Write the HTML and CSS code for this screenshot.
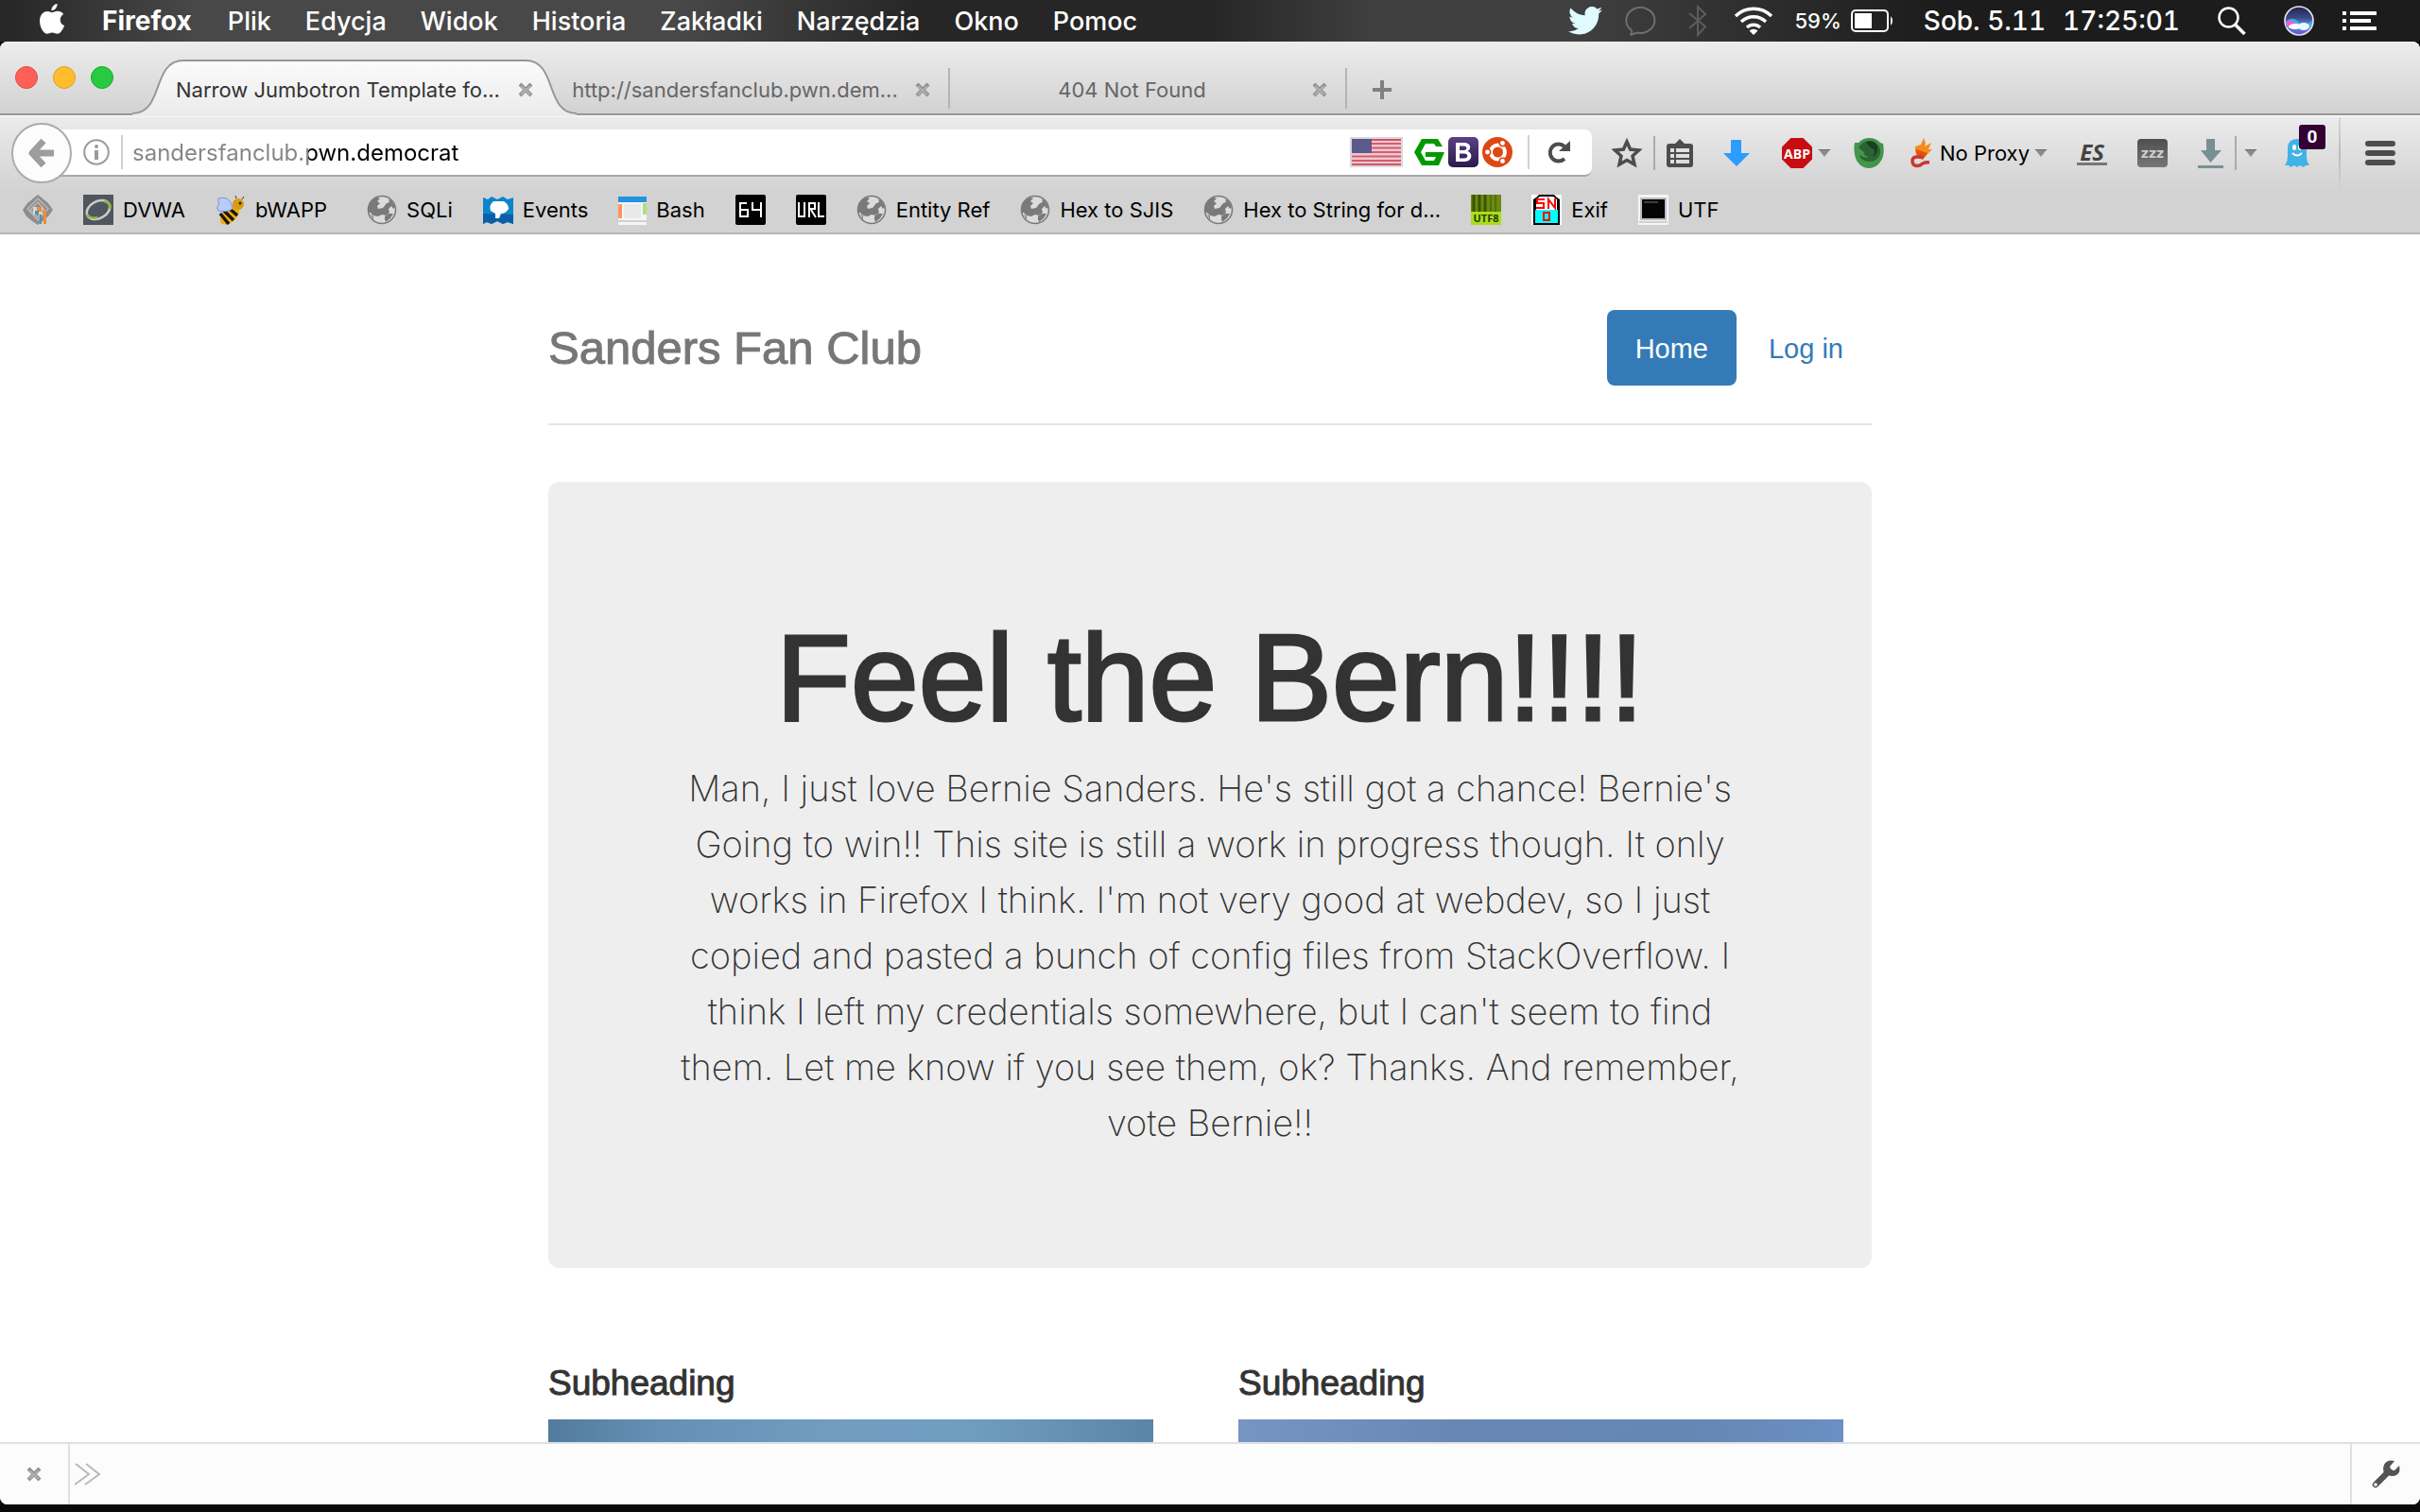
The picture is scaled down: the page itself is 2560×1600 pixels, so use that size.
FILE: index.html
```html
<!DOCTYPE html>
<html lang="pl">
<head>
<meta charset="utf-8">
<title>Narrow Jumbotron Template for Bootstrap</title>
<meta name="viewport" content="width=device-width, initial-scale=1">
<link rel="stylesheet" href="styles.css">
</head>
<body>
<svg class="defs" aria-hidden="true">
  <symbol id="globe" viewBox="0 0 32 32">
    <circle cx="16" cy="16" r="14.5" fill="#dcdcdc" stroke="#7a7a7a" stroke-width="1.6"/>
    <path fill="#7a7a7a" d="M2 14c0-6 4-10 9-11l3 1-3 3 3 2-3 3 1 3 5-1 4-5 3-1-1-3 3 1 4 7-2 2-2-3-3 3 1 4-4 3-4-1-4 2-5-1-3-3-2 0z"/>
    <path fill="#7a7a7a" d="M4 20l3 3 0 4zM19 23l4-3 5 0-3 5-5 4-1-3z"/>
  </symbol>
  <symbol id="close" viewBox="0 0 16 16">
    <path d="M2 2l12 12M14 2L2 14" stroke="#8f8f8f" stroke-width="4" fill="none"/>
    <path d="M3 4l10 9M13 4l-10 9" stroke="#b0b0b0" stroke-width="2" fill="none"/>
  </symbol>
  <symbol id="caret" viewBox="0 0 14 9">
    <path d="M0 0h14L7 9z" fill="#8b8b8b"/><path d="M0 0h14v1H0z" fill="#6c6c6c"/>
  </symbol>
</svg>

<header class="menubar">
  <nav class="menus" aria-label="Menu">
    <button class="apple" aria-label="Apple"><svg width="28" height="32" viewBox="0 0 28 32"><path fill="#fff" d="M19.500 0c.4 3.600-2.600 7.200-6 7.300-.4-3.500 2.800-6.900 6-7.300zM14 9.200c1.300 0 3-1.500 6-1.500 2.500 0 4.800 1.200 6.200 3.200-5.200 3.200-4.300 10.200.9 12.200-1.400 4-4.200 8.700-7.300 8.700-2 0-3-1.300-5.500-1.300s-3.600 1.300-5.400 1.300C5 31.800 1 24.800 1 18.300c0-6.300 3.800-10.200 8-10.200 2.300 0 4 1.100 5 1.100z"/></svg></button>
    <button class="app-name">Firefox</button>
    <button>Plik</button>
    <button>Edycja</button>
    <button>Widok</button>
    <button>Historia</button>
    <button>Zakładki</button>
    <button>Narzędzia</button>
    <button>Okno</button>
    <button>Pomoc</button>
  </nav>
  <div class="status">
    <svg width="36" height="30" viewBox="0 0 24 20"><path fill="#dffbff" d="M24 2.400c-.9.400-1.800.7-2.800.8 1-.6 1.800-1.600 2.200-2.700-1 .6-2 1-3.100 1.200a4.900 4.900 0 0 0-8.400 4.500C7.700 6 4.100 4 1.700 1a4.900 4.900 0 0 0 1.500 6.600c-.8 0-1.600-.2-2.200-.6v.1c0 2.400 1.700 4.400 3.900 4.800-.7.200-1.500.2-2.200.1.600 2 2.400 3.400 4.600 3.400A9.900 9.900 0 0 1 0 17.400 14 14 0 0 0 7.500 19.600c9.100 0 14-7.500 14-14v-.6c1-.7 1.800-1.600 2.500-2.600z"/></svg>
    <svg class="bubble" width="34" height="34" viewBox="0 0 34 34"><path d="M8 27a15 13.500 0 1 1 6 2.600L6.500 32c2-1.500 2-3 1.500-5z" fill="none" stroke="#6e6e6e" stroke-width="2"/></svg>
    <svg class="bluetooth" width="20" height="34" viewBox="0 0 20 34"><path d="M1 9l17 14-8 9V2l8 8L1 25" fill="none" stroke="#5d5d5d" stroke-width="2"/></svg>
    <svg class="wifi" width="42" height="32" viewBox="0 0 42 32"><g fill="none" stroke="#fff" stroke-width="3.500"><path d="M2 11a27 27 0 0 1 38 0"/><path d="M8 17a18.500 18.500 0 0 1 26 0"/><path d="M14 23a10 10 0 0 1 14 0"/></g><path fill="#fff" d="M16.500 26.500a6.500 6.500 0 0 1 9 0L21 31z"/></svg>
    <span class="battery-text">59%</span>
    <svg class="battery" width="46" height="24" viewBox="0 0 46 24"><rect x="1" y="1" width="38" height="22" rx="4" fill="none" stroke="#fff" stroke-width="2"/><rect x="4" y="4" width="18" height="16" fill="#fff"/><path fill="#fff" d="M42 7q4 5 0 10z"/></svg>
    <time class="date">Sob. 5.11</time>
    <time class="clock">17:25:01</time>
    <svg class="search" width="30" height="30" viewBox="0 0 30 30"><circle cx="11.500" cy="11.500" r="10" fill="none" stroke="#fff" stroke-width="2.500"/><path d="M18.500 19l10 10" stroke="#fff" stroke-width="3.500"/></svg>
    <svg class="siri" width="32" height="32" viewBox="0 0 32 32"><defs><linearGradient id="siri-bg" x1="0" y1="0" x2="0" y2="1"><stop offset="0" stop-color="#26224a"/><stop offset=".4" stop-color="#3a4a86"/><stop offset=".65" stop-color="#6c8cf0"/><stop offset="1" stop-color="#5a56c8"/></linearGradient></defs><circle cx="16" cy="16" r="15" fill="url(#siri-bg)" stroke="#e9e4f4" stroke-width="1.600"/><path d="M2 17q8-7 14 1t14-3q0 6-5 8-9-5-23 0z" fill="#28c9e8" opacity=".8"/><path d="M2 18q6-5 11 1l-6 5q-5-2-5-6z" fill="#f25ad0"/><ellipse cx="12" cy="22" rx="7" ry="3" fill="#fff"/><ellipse cx="21" cy="22" rx="6" ry="4" fill="#e8fbff"/></svg>
    <svg class="list" width="36" height="20" viewBox="0 0 36 20"><path fill="#fff" d="M0 0h4v4H0zM8 0h28v4H8zM0 8h4v4H0zM8 8h22v4H8zM0 16h4v4H0zM8 16h28v4H8z"/></svg>
  </div>
</header>

<div class="window">
  <div class="tabstrip">
    <div class="lights">
      <button class="light red" aria-label="Zamknij"></button>
      <button class="light yellow" aria-label="Minimalizuj"></button>
      <button class="light green" aria-label="Powiększ"></button>
    </div>
    <div class="tab active">
      <svg class="tab-shape" viewBox="0 0 470 60" preserveAspectRatio="none" aria-hidden="true">
        <defs><linearGradient id="tab-fill" x1="0" y1="0" x2="0" y2="1"><stop offset="0" stop-color="#fbfbfb"/><stop offset="1" stop-color="#ebebeb"/></linearGradient></defs>
        <path fill="url(#tab-fill)" d="M0 60V57C34 57 20 1 54 1H416C450 1 436 57 470 57V60z"/>
        <path fill="none" stroke="#969696" stroke-width="2" d="M0 57C34 57 20 1 54 1H416C450 1 436 57 470 57"/>
      </svg>
      <span class="tab-title">Narrow Jumbotron Template fo...</span>
      <button class="tab-close" aria-label="Zamknij kartę"><svg width="16" height="16"><use href="#close"/></svg></button>
    </div>
    <div class="tab">
      <span class="tab-title">http://sandersfanclub.pwn.dem...</span>
      <button class="tab-close" aria-label="Zamknij kartę"><svg width="16" height="16"><use href="#close"/></svg></button>
    </div>
    <div class="tab">
      <span class="tab-title">404 Not Found</span>
      <button class="tab-close" aria-label="Zamknij kartę"><svg width="16" height="16"><use href="#close"/></svg></button>
    </div>
    <button class="new-tab" aria-label="Nowa karta"><svg width="20" height="20" viewBox="0 0 20 20"><path fill="#808080" d="M8 0h4v8h8v4h-8v8H8v-8H0V8h8z"/></svg></button>
  </div>

  <div class="chrome">
    <div class="navbar">
      <button class="back" aria-label="Wstecz"><svg width="28" height="32" viewBox="0 0 28 32"><path d="M16 3L4 16l12 13M5 16h22" fill="none" stroke="#9d9d9d" stroke-width="7" stroke-linejoin="round"/></svg></button>
      <div class="urlbar">
        <svg width="28" height="28" viewBox="0 0 28 28"><circle cx="14" cy="14" r="12.800" fill="none" stroke="#9a9a9a" stroke-width="2"/><circle cx="14" cy="8" r="2" fill="#9a9a9a"/><path fill="#9a9a9a" d="M12 12h4v10h-4z"/></svg>
        <span class="url-rule"></span>
        <input class="url" type="text" aria-label="Adres" value="sandersfanclub.pwn.democrat">
        <svg class="flag" width="56" height="32" viewBox="0 0 56 32"><rect width="56" height="32" fill="#d9d9d9"/><rect x="2" y="2" width="52" height="28" fill="#f2c6ce"/><path stroke="#c4304c" stroke-width="1.600" d="M2 3h52M2 29h52"/><path stroke="#cf5f73" stroke-width="2" d="M2 7h52M2 11.500h52M2 16h52M2 20.500h52M2 25h52"/><rect x="2" y="2" width="21" height="15" fill="#5a5a8c"/></svg>
        <svg class="addon" width="32" height="32" viewBox="0 0 32 32"><path fill="#009900" d="M8 2h17l5 8h-7l-2-3H12l-5 9 5 9h9l2-4H12v-5h20l-6 14H8L0 16z"/></svg>
        <svg class="addon" width="32" height="32" viewBox="0 0 32 32"><defs><linearGradient id="boot" x1="0" y1="0" x2="0" y2="1"><stop offset="0" stop-color="#5b4183"/><stop offset="1" stop-color="#2a1a4c"/></linearGradient></defs><rect width="32" height="32" rx="5" fill="url(#boot)"/><path fill="#fff" fill-rule="evenodd" d="M8 6h9c7 0 8 7 3.500 9 6 2 5 11-3 11H8zM12 9.500v4.500h4.500c4 0 4-4.500 0-4.500zM12 17.500v5h5c4.500 0 4.500-5 0-5z"/></svg>
        <svg class="addon" width="32" height="32" viewBox="0 0 32 32"><circle cx="16" cy="16" r="16" fill="#dd4814"/><circle cx="16.500" cy="16" r="7.500" fill="none" stroke="#fff" stroke-width="4"/><g fill="#fff" stroke="#dd4814" stroke-width="1.500"><circle cx="5.500" cy="16" r="3.200"/><circle cx="21.500" cy="6.500" r="3.200"/><circle cx="21.500" cy="25.500" r="3.200"/></g></svg>
        <span class="url-rule reload-rule"></span>
        <button class="reload" aria-label="Odśwież"><svg width="24" height="24" viewBox="0 0 24 24"><path d="M17 19a9 9 0 1 1 0-13" fill="none" stroke="#4d4d4d" stroke-width="4"/><path fill="#4d4d4d" d="M23 0v11H11z"/></svg></button>
      </div>
      <div class="tools">
        <button class="star" aria-label="Zakładka"><svg width="32" height="32" viewBox="0 0 32 32"><path d="M16 4l3.600 8 9 1-6.600 6 2 9-8-4.500L8 28l2-9-6.600-6 9-1z" fill="none" stroke="#4d4d4d" stroke-width="3.500"/></svg></button>
        <span class="tool-rule"></span>
        <button class="clip" aria-label="Lista"><svg width="28" height="31" viewBox="0 0 28 31"><path fill="#4d4d4d" fill-rule="evenodd" d="M3 5h6l5-5 5 5h6q3 0 3 3v19q0 3-3 3H3q-3 0-3-3V8q0-3 3-3zM4 10h4v4H4zM10 10h14v4H10zM4 16h4v4H4zM10 16h14v4H10zM4 22h4v4H4zM10 22h14v4H10z"/></svg></button>
        <button class="blue-arrow" aria-label="Pobierz"><svg width="28" height="28" viewBox="0 0 28 28"><path fill="#2e9bff" d="M8 1q0-1 1-1h9q1 0 1 1v13h9L14 28 0 14h8z"/></svg></button>
        <button class="abp" aria-label="Adblock Plus"><svg width="32" height="32" viewBox="0 0 32 32"><path fill="#c70d12" d="M9.500 0h13L32 9.500v13L22.500 32h-13L0 22.500v-13z"/><text x="16" y="22" text-anchor="middle" class="abp-text">ABP</text></svg></button>
        <button class="menu-caret" aria-label="Opcje"><svg width="14" height="8"><use href="#caret"/></svg></button>
        <button class="shield" aria-label="Ochrona"><svg width="32" height="32" viewBox="0 0 32 32"><path fill="#43954a" d="M1 5l4 0Q10 0 16 0q8 0 12 5l3 1q2 12-2 18-5 8-13 8T3 24Q-1 15 1 5z"/><path fill="#2b6334" d="M5 10q6-9 15-7 9 4 8 13-2 9-12 9-9-1-10-7 6 4 10 2-6-1-5-5-3-2-6-5z"/><path fill="#17401f" d="M13 4q9-2 12 5 1 8-5 11 4-6 0-9-4-1-7-7z"/></svg></button>
        <button class="proxy"><svg width="24" height="32" viewBox="0 0 24 32"><path fill="#f58b1e" d="M5 9l6-2 3-7 2 6-1 3 7-4-3 7 4 0-5 5-3 4-7-1-3-5z"/><path fill="#e2500f" d="M6 12l12 4-4 5-7-1z"/><path d="M14 21q-12-3-12 3 0 7 8 5 4-4 10-3" fill="none" stroke="#c8392f" stroke-width="3.500"/></svg><span>No Proxy</span><svg class="proxy-caret" width="14" height="8"><use href="#caret"/></svg></button>
        <button class="es">ES</button>
        <button class="zzz">zzz</button>
        <button class="download" aria-label="Pobrane"><svg width="27" height="31" viewBox="0 0 27 31"><path fill="#789093" d="M9 0h9v12h7L13.500 25 3 12h6zM0 28h27v3H0z"/></svg></button>
        <span class="tool-rule"></span>
        <button class="download-caret" aria-label="Opcje pobierania"><svg width="14" height="8"><use href="#caret"/></svg></button>
        <button class="ghost" aria-label="Ghostery"><svg width="26" height="30" viewBox="0 0 26 30"><path fill="#41b3e6" d="M3 10Q3 0 13 0t10 10v9q0 5 3 9l-4 0-2 2-4-2-3 2-3-2-4 2-2-2-4 0q3-4 3-9z"/><ellipse cx="10" cy="9" rx="2" ry="3" fill="#fff"/><ellipse cx="16" cy="9" rx="2" ry="3" fill="#fff"/><path d="M8 15q5 5 10 0" fill="none" stroke="#fff" stroke-width="1.800"/></svg><span class="badge">0</span></button>
        <span class="menu-rule"></span>
        <button class="hamburger" aria-label="Menu"><svg width="32" height="26" viewBox="0 0 32 26"><path stroke="#4d4d4d" stroke-width="6" stroke-linecap="round" d="M3 3h26M3 13h26M3 23h26"/></svg></button>
      </div>
    </div>

    <nav class="bookmarks" aria-label="Zakładki">
      <a href="#" aria-label="Strona"><svg width="32" height="32" viewBox="0 0 32 32"><path fill="#8f8d8a" d="M16 0l5 4 6 5 5 7-5 7-6 5-5 4-6-4-6-5-4-7 5-7 6-5z"/><g fill="none" stroke="#bab8b5" stroke-width="1.500"><path d="M16 4l11 11-11 12L5 15z"/><path d="M16 8l7 8-7 8-8-8z"/></g><path fill="#d6d6d6" d="M11 13h10v8H11z"/><path fill="#f08b3c" d="M15 13h5v4h5v14h-3V18h-7z"/><path fill="#4b93b5" d="M13 17h4v4h-4zM18 21h2v10h-2z"/></svg></a>
      <a href="#"><svg width="32" height="32" viewBox="0 0 32 32"><rect width="32" height="32" fill="#50565d"/><ellipse cx="16" cy="16" rx="13" ry="9" transform="rotate(-28 16 16)" fill="none" stroke="#c9cdc6" stroke-width="2.500"/><path d="M4 21q4 5 11 3M22 7q8 1 6 8" fill="none" stroke="#8db543" stroke-width="2.500"/></svg>DVWA</a>
      <a href="#" class="spaced"><svg width="32" height="32" viewBox="0 0 32 32"><ellipse cx="15" cy="22" rx="12" ry="7" transform="rotate(-42 15 22)" fill="#efae0b"/><path d="M5 20l9 11M9 17l10 10M14 14l9 8" stroke="#1c1607" stroke-width="3.500"/><circle cx="24" cy="10" r="6" fill="#d99a0d"/><circle cx="26" cy="9" r="1.500" fill="#222"/><path d="M22 4l-1-3M28 5l2-3" stroke="#333"/><path fill="#b5cdfb" stroke="#7f93c4" d="M3 4q10-3 14 6l1 5q-6 4-15 2-3-4 1-7-2-3-1-6z"/></svg>bWAPP</a>
      <a href="#"><svg width="32" height="32"><use href="#globe"/></svg>SQLi</a>
      <a href="#"><svg width="32" height="32" viewBox="0 0 32 32"><path fill="#0b86c9" d="M0 3l5 2 4-3 6 3 6-3 5 3 6-2v28l-6-2-5 2-6-3-6 3-5-2-4 2z"/><path fill="#0a5fa8" d="M0 20l32 1v10l-6-2-5 2-6-3-6 3-5-2-4 2z"/><path fill="#fff" d="M11 7h11q5 3 5 8-3 5-8 5l-2 5h-4l0-5-5-3q-2-6 3-10z"/></svg>Events</a>
      <a href="#"><svg width="30" height="32" viewBox="0 0 30 32"><path fill="#f6f6f6" d="M0 2h30v30H0z"/><path fill="#2393df" d="M0 2h30v6H0z"/><path fill="#ff9661" d="M0 10h4v15H0z"/><path fill="#b4dd7f" d="M26 9h4v12h-4z"/><path fill="#e9e9ea" d="M6 10h18v15H6z"/><path fill="#cfcfcf" d="M0 27h30v2H0z"/></svg>Bash</a>
      <a href="#" aria-label="64"><svg width="32" height="32" viewBox="0 0 32 32"><rect width="32" height="32" rx="2"/><path d="M12 9H5v14h8v-7H5M18 8v8h8M27 8v16" fill="none" stroke="#fff" stroke-width="2"/></svg></a>
      <a href="#" aria-label="URL"><svg width="32" height="32" viewBox="0 0 32 32"><rect width="32" height="32" rx="2"/><path d="M3 8v15h6V8M14 24V9h6v6h-6M16 16l5 8M24 8v15h6" fill="none" stroke="#fff" stroke-width="2"/></svg></a>
      <a href="#"><svg width="32" height="32"><use href="#globe"/></svg>Entity Ref</a>
      <a href="#"><svg width="32" height="32"><use href="#globe"/></svg>Hex to SJIS</a>
      <a href="#"><svg width="32" height="32"><use href="#globe"/></svg>Hex to String for d...</a>
      <a href="#" aria-label="UTF8"><svg class="utf-icon" width="32" height="32" viewBox="0 0 32 32"><path fill="#6b8a10" d="M0 0h32v18H0z"/><path stroke="#3d5200" stroke-width="3" d="M3 0v18M9 0v18M15 0v18"/><path stroke="#557008" stroke-width="2" d="M21 0v18M26 0v18"/><path fill="#a9dd1c" d="M0 18h32v14H0z"/><text x="16" y="29" text-anchor="middle" class="utf-text">UTF8</text></svg></a>
      <a href="#"><svg width="32" height="32" viewBox="0 0 32 32"><path fill="#fff" d="M0 0h32v32H0z"/><path fill="#000" d="M2 5l3-2 3-3h16l3 3 3 2v27H2z"/><path fill="#fff" d="M5 5l4-3h14l4 3v11H5z"/><path fill="#0ff" d="M4 16h24v14H4z"/><path d="M14 5H6v4h7v5H5M18 15V5l7 9V4M13 19h6v8h-6z" fill="none" stroke="#f00" stroke-width="2"/></svg>Exif</a>
      <a href="#"><svg width="32" height="32" viewBox="0 0 32 32"><path fill="#f5f5f8" d="M0 0h32v32H0z"/><path fill="#bcbcc2" d="M2 3h28v24H2z"/><path fill="#050505" d="M4 5h24v20H4z"/><path stroke="#777" d="M6 8h15"/><path stroke="#d0d0d0" stroke-width="2" d="M1 29h30"/></svg>UTF</a>
    </nav>
  </div>

  <main class="viewport">
    <div class="container">
      <header class="site-header">
        <h3 class="brand">Sanders Fan Club</h3>
        <nav class="pills">
          <a class="pill current" href="#">Home</a>
          <a class="pill" href="#">Log in</a>
        </nav>
      </header>
      <section class="jumbotron">
        <h1>Feel the Bern!!!!</h1>
        <p>Man, I just love Bernie Sanders. He's still got a chance! Bernie's<br>
          Going to win!! This site is still a work in progress though. It only<br>
          works in Firefox I think. I'm not very good at webdev, so I just<br>
          copied and pasted a bunch of config files from StackOverflow. I<br>
          think I left my credentials somewhere, but I can't seem to find<br>
          them. Let me know if you see them, ok? Thanks. And remember,<br>
          vote Bernie!!</p>
      </section>
      <section class="marketing">
        <article><h4>Subheading</h4><div class="photo sky"></div></article>
        <article><h4>Subheading</h4><div class="photo dusk"></div></article>
      </section>
    </div>
  </main>

  <footer class="devbar">
    <button class="dev-close" aria-label="Zamknij"><svg width="16" height="16"><use href="#close"/></svg></button>
    <label class="prompt" for="command"><svg width="28" height="24" viewBox="0 0 28 24"><path d="M1 1l14 11L0 23M12 1l14 11-15 11" fill="none" stroke="#b9b9b9" stroke-width="2"/></svg></label>
    <input id="command" type="text" aria-label="Polecenie">
    <button class="wrench" aria-label="Narzędzia"><svg width="30" height="30" viewBox="0 0 30 30"><path d="M4 26L18 12" stroke="#555452" stroke-width="6.500" stroke-linecap="round"/><path fill="#555452" d="M24 1q-8-2-11 4-3 9 4 11 8 3 12-3 1-4 0-7l-5 5q-4 0-5-4z"/><circle cx="4" cy="26" r="1.800" fill="#fff"/></svg></button>
  </footer>
</div>
</body>
</html>
```

FILE: styles.css
```css
* { box-sizing: border-box; }

html, body { height: 100%; margin: 0; }

body {
  display: flex;
  flex-direction: column;
  padding-bottom: 8px;
  overflow: hidden;
  background: #0a0a0a;
  font-family: Inter, "Open Sans", sans-serif;
  font-size: 22px;
  color: #000;
}

button {
  display: flex;
  align-items: center;
  justify-content: center;
  margin: 0;
  padding: 0;
  border: 0;
  background: none;
  color: inherit;
  font: inherit;
}

svg { display: block; flex: none; }
.defs { position: absolute; width: 0; height: 0; }

/* Menu bar */
.menubar {
  display: flex;
  flex: none;
  align-items: center;
  justify-content: space-between;
  height: 44px;
  padding: 0 46px 0 41px;
  background: linear-gradient(90deg, #262626 0, #484848 8%, #484848 28%, #262626 38%, #262626 50%, #404040 57%, #404040 65%, #1c1c1c 80%, #1c1c1c 100%);
  color: #fff;
  font-size: 27px;
  font-weight: 500;
}
.menus, .status { display: flex; align-items: center; }
.menus { gap: 36px; }
.menus .app-name { margin: 0 2px 0 3px; font-size: 28px; font-weight: 700; }
.apple { padding-bottom: 4px; }
.bubble { margin-left: 23px; }
.bluetooth { margin-left: 34px; }
.wifi { margin-left: 28px; }
.battery-text { margin-left: 22px; font-size: 22px; }
.battery { margin-left: 10px; }
.date, .clock { font-size: 28px; font-variant-numeric: tabular-nums; }
.date { margin-left: 31px; }
.clock { margin-left: 18px; }
.search { margin-left: 40px; }
.siri { margin-left: 40px; }
.list { margin-left: 30px; }

/* Browser window */
.window {
  display: flex;
  flex: 1;
  flex-direction: column;
  min-height: 0;
  overflow: hidden;
  border-radius: 8px;
  background: #fff;
}

.tabstrip {
  display: flex;
  flex: none;
  align-items: stretch;
  height: 78px;
  padding-top: 18px;
  background: linear-gradient(#ededed, #d2d2d2);
  border-bottom: 2px solid #969696;
}
.lights { display: flex; flex: none; gap: 16px; width: 165px; padding: 8px 0 0 16px; }
.light { width: 24px; height: 24px; border-radius: 50%; }
.red { background: #ff5f57; border: 1px solid #e2463f; }
.yellow { background: #ffbd2e; border: 1px solid #e1a116; }
.green { background: #28ca42; border: 1px solid #12ac28; }

.tab {
  position: relative;
  display: flex;
  flex: 0 1 420px;
  align-items: center;
  padding: 8px 21px 0 2px;
  color: #666;
}
.tab + .tab::after {
  content: "";
  position: absolute;
  top: 10px;
  right: 0;
  bottom: 5px;
  width: 2px;
  background: #b4b4b4;
}
.tab-shape { position: absolute; left: -25px; top: 1px; width: calc(100% + 50px); height: 60px; }
.active { z-index: 1; color: #333; }
.tab-title {
  position: relative;
  flex: 1;
  overflow: hidden;
  text-align: center;
  white-space: nowrap;
}
.tab-close { position: relative; flex: none; }
.new-tab { padding: 8px 27px 0; }

.chrome {
  flex: none;
  border-top: 2px solid #f6f6f6;
  border-bottom: 2px solid #b4b4b4;
  background: linear-gradient(#ebebeb, #d2d2d2 65%);
}
.navbar { display: flex; align-items: center; height: 76px; padding: 0 26px 0 12px; }
.back {
  z-index: 1;
  flex: none;
  width: 64px;
  height: 64px;
  border: 2px solid #ababab;
  border-radius: 50%;
  background: #fcfcfc;
}
.urlbar {
  display: flex;
  flex: 1;
  align-items: center;
  height: 50px;
  margin-left: -18px;
  padding: 0 22px 0 30px;
  border-bottom: 2px solid #a9a9a9;
  border-radius: 0 8px 8px 0;
  background: #fff;
}
.url-rule { flex: none; width: 2px; height: 36px; margin-left: 12px; background: #d2d2d2; }
.url {
  flex: 1;
  min-width: 0;
  margin-left: 10px;
  padding: 0;
  border: 0;
  background: linear-gradient(90deg, #858585 186px, #000 186px);
  background-clip: text;
  color: transparent;
  font: inherit;
  font-size: 24px;
}
.flag { margin-right: 8px; }
.addon { margin-left: 4px; }
.reload-rule { margin-left: 16px; }
.reload { margin-left: 20px; }

.tools { display: flex; flex: none; align-items: center; }
.star { margin-left: 21px; }
.tool-rule { flex: none; width: 2px; height: 36px; margin-left: 12px; background: #ababab; }
.clip { margin-left: 12px; }
.blue-arrow { margin-left: 32px; }
.abp { margin-left: 34px; }
.abp-text { fill: #fff; font: 700 14px "Open Sans", sans-serif; }
.menu-caret { margin-left: 6px; }
.shield { margin-left: 24px; }
.proxy { margin-left: 28px; }
.proxy span { margin-left: 7px; }
.proxy-caret { margin-left: 5px; }
.es {
  width: 32px;
  height: 26px;
  margin-left: 31px;
  border-bottom: 3px solid #777;
  color: #444;
  font: italic 700 24px/22px "Open Sans", sans-serif;
}
.zzz {
  width: 32px;
  height: 30px;
  margin-left: 32px;
  border-radius: 4px;
  background: linear-gradient(#4f4f4f, #777);
  color: #ccc;
  font: 700 14px/16px "DejaVu Sans", sans-serif;
}
.download { margin-left: 32px; }
.download-caret { margin-left: 8px; }
.ghost { position: relative; margin-left: 29px; }
.badge {
  position: absolute;
  left: 15px;
  top: -15px;
  width: 28px;
  height: 26px;
  border-radius: 3px;
  background: #330033;
  color: #fff;
  font: 700 19px/26px Roboto, sans-serif;
  text-align: center;
}
.menu-rule { width: 2px; height: 76px; margin-left: 31px; background: linear-gradient(#d8d8d8, #bbb, #d2d2d2); }
.hamburger { margin-left: 26px; }

.bookmarks { display: flex; align-items: center; height: 46px; padding: 0 24px 2px; gap: 32px; }
.bookmarks a { display: flex; align-items: center; gap: 10px; color: #000; text-decoration: none; white-space: nowrap; }
.bookmarks .spaced { padding-right: 10px; }
.utf-icon { overflow: visible; }
.utf-text { fill: #2a3a00; font: 700 11px "Open Sans", sans-serif; }

/* Page */
.viewport { flex: 1; min-height: 0; overflow: hidden; font-family: "Liberation Sans", Arial, sans-serif; color: #333; }
.container { max-width: 1400px; margin: 0 auto; }
.site-header {
  display: flex;
  align-items: center;
  justify-content: space-between;
  margin-bottom: 60px;
  padding: 80px 0 40px;
  border-bottom: 2px solid #e5e5e5;
}
.brand { margin: 0; color: #777; font-size: 49px; font-weight: 400; -webkit-text-stroke: 1px #777; }
.pills { display: flex; gap: 4px; }
.pill { padding: 21px 30px 19px; border-radius: 8px; color: #337ab7; font-size: 29px; line-height: 40px; text-decoration: none; }
.current { background: #337ab7; color: #fff; }

.jumbotron {
  padding: 138px 120px 124px;
  border-radius: 12px;
  background: #eee;
  text-align: center;
}
.jumbotron h1 { margin: 0 0 18px; font-size: 129px; font-weight: 400; line-height: 139px; -webkit-text-stroke: 3px #333; }
.jumbotron p { margin: 0; font-family: Inter, sans-serif; font-size: 38px; font-weight: 200; line-height: 59px; white-space: nowrap; }

.marketing { display: grid; grid-template-columns: 1fr 1fr; gap: 60px; margin-top: 100px; }
.marketing article { padding-right: 30px; }
.marketing h4 { margin: 0 0 16px; font-size: 37px; font-weight: 400; line-height: 44px; -webkit-text-stroke: 1px #333; }
.photo { height: 300px; }
.sky { background: linear-gradient(90deg, #527b9d, #6490b5 18%, #709cc0 45%, #6f9dc0 70%, #5a85a8); }
.dusk { background: linear-gradient(90deg, #7795c3, #6888b3 35%, #6487b4 75%, #6c8fc4); }

.devbar { display: flex; flex: none; height: 66px; border-top: 2px solid #dde1e4; background: #fcfcfc; }
.dev-close { width: 74px; border-right: 2px solid #dde1e4; }
.prompt { display: flex; align-items: center; padding-left: 5px; }
.devbar input { flex: 1; min-width: 0; border: 0; background: none; font: inherit; }
.wrench { width: 74px; border-left: 2px solid #dde1e4; }
```
